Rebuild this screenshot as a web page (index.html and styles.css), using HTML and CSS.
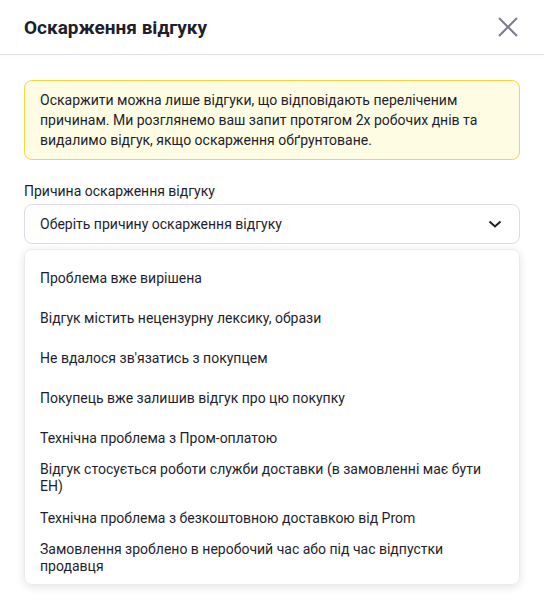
FILE: index.html
```html
<!DOCTYPE html>
<html lang="uk">
<head>
    <meta charset="UTF-8">
    <meta name="viewport" content="width=device-width, initial-scale=1.0">
    <title>Оскарження відгуку</title>
    <link rel="stylesheet" href="styles.css">
</head>
<body>
    <div class="modal">
        <div class="modal-header">
            <h2 class="modal-title">Оскарження відгуку</h2>
            <button class="close-btn" aria-label="Закрити">
                <svg width="20" height="20" viewBox="0 0 20 20">
                    <path d="M1 1L19 19M19 1L1 19" stroke="#7d7b92" stroke-width="2" fill="none"/>
                </svg>
            </button>
        </div>

        <div class="modal-body">
            <div class="notice">
                Оскаржити можна лише відгуки, що відповідають переліченим причинам. Ми розглянемо ваш запит протягом 2х робочих днів та видалимо відгук, якщо оскарження обґрунтоване.
            </div>

            <label class="field-label">Причина оскарження відгуку</label>
            <div class="select">
                <span>Оберіть причину оскарження відгуку</span>
                <svg width="14" height="8" viewBox="0 0 14 8">
                    <path d="M1.5 1.5L7 6.5L12.5 1.5" stroke="#1e1e2d" stroke-width="2" fill="none"/>
                </svg>
            </div>

            <ul class="options">
                <li>Проблема вже вирішена</li>
                <li>Відгук містить нецензурну лексику, образи</li>
                <li>Не вдалося зв'язатись з покупцем</li>
                <li>Покупець вже залишив відгук про цю покупку</li>
                <li>Технічна проблема з Пром-оплатою</li>
                <li>Відгук стосується роботи служби доставки (в замовленні має бути ЕН)</li>
                <li>Технічна проблема з безкоштовною доставкою від Prom</li>
                <li>Замовлення зроблено в неробочий час або під час відпустки продавця</li>
            </ul>
        </div>
    </div>
</body>
</html>
```

FILE: styles.css
```css
body {
    margin: 0;
    background-color: #fff;
    font-family: Roboto, "Noto Sans", sans-serif;
    color: #1e1e2d;
}

.modal-header {
    height: 54px;
    padding: 0 26px 0 24px;
    display: flex;
    align-items: center;
    justify-content: space-between;
    border-bottom: 1px solid #e1e0e8;
}

.modal-title {
    margin: 0;
    font-size: 19px;
    font-weight: 700;
}

.close-btn {
    padding: 0;
    border: none;
    background: transparent;
    cursor: pointer;
    display: flex;
}

.modal-body {
    padding: 25px 24px;
}

.notice {
    background-color: #fffce4;
    border: 1px solid #fbd43c;
    border-radius: 8px;
    padding: 9px 15px;
    font-size: 14px;
    line-height: 20px;
}

.field-label {
    display: block;
    margin-top: 21px;
    font-size: 14px;
    line-height: 20px;
}

.select {
    margin-top: 3px;
    height: 38px;
    border: 1px solid #dedce9;
    border-radius: 8px;
    padding: 0 17px 0 15px;
    display: flex;
    align-items: center;
    justify-content: space-between;
    font-size: 14px;
}

.options {
    list-style: none;
    margin: 5px 0 0;
    padding: 8px 0 6px;
    border: 1px solid #ebeaf1;
    border-radius: 8px;
    box-shadow: 0 2px 8px rgba(30, 30, 60, 0.12);
}

.options li {
    min-height: 40px;
    display: flex;
    align-items: center;
    padding: 0 15px;
    font-size: 14px;
    line-height: 17px;
}
```
